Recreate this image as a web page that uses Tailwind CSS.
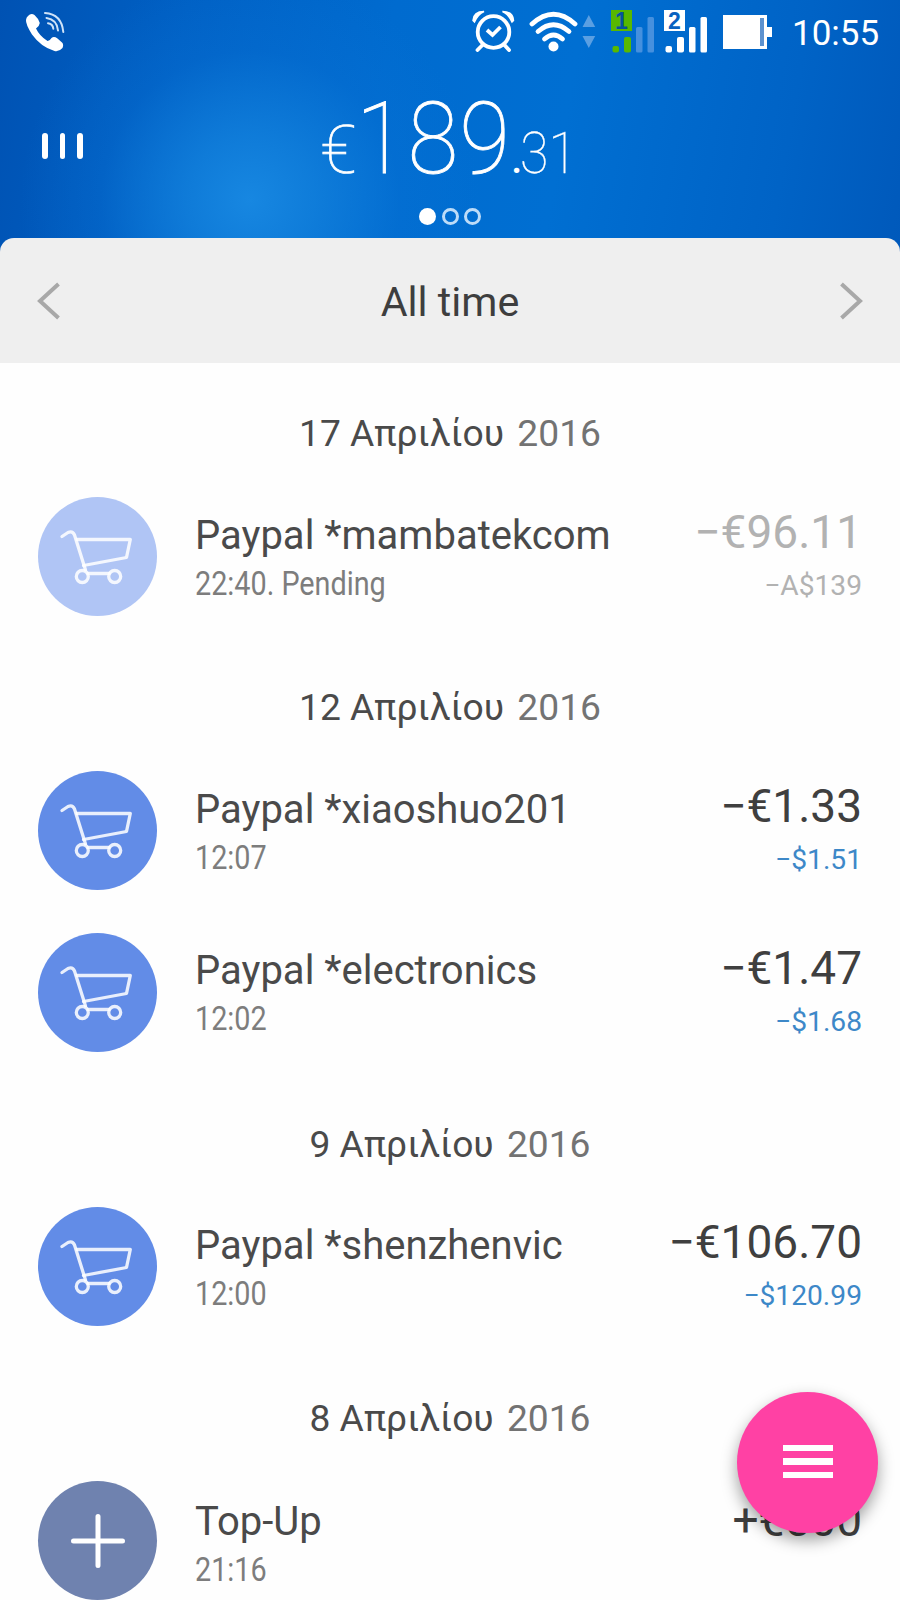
<!DOCTYPE html>
<html lang="en">
<head>
<meta charset="utf-8">
<title>Transactions</title>
<script src="https://cdn.jsdelivr.net/npm/@tailwindcss/browser@4"></script>
</head>
<body class="bg-white">
<svg class="hidden">
  <symbol id="cart" viewBox="0 0 119 119">
    <g fill="none" stroke="#fff" stroke-opacity=".86" stroke-width="3.300" stroke-linecap="round" stroke-linejoin="round">
      <path d="M24 39.500 L30 35.500 Q34.500 33.500 36.500 38 L47.500 73"/>
      <path d="M39 42.500 H92.300 L88.500 60.500 L45.500 68.500"/>
      <path d="M50 76.500 H71"/>
      <circle cx="44.300" cy="79.500" r="6"/><circle cx="76.700" cy="79.500" r="6"/>
    </g>
  </symbol>
</svg>
<main class="relative flex h-[1600px] w-[900px] flex-col overflow-hidden bg-[#fefefe] font-['Roboto',sans-serif]">
  <header class="flex h-[254px] shrink-0 flex-col bg-[radial-gradient(ellipse_230px_230px_at_250px_200px,#1787e1_0%,rgba(20,131,222,0.75)_28%,rgba(10,115,214,0.3)_65%,rgba(0,108,208,0)_100%),linear-gradient(100deg,#0052b3_0%,#0060c4_20%,#006bcf_42%,#006fd2_62%,#0063c6_86%,#0059bb_100%)] text-white">
    <div class="flex h-[66px] items-start">
      <svg class="ml-[24px] mt-[10px] h-[44px] w-[44px]" viewBox="24 10 44 44">
        <path fill="#fff" d="M28 16 Q31 12.800 34.500 15 Q38.500 18.500 39.800 23 Q39.500 26 36 28.500 Q39.500 36 47.500 41 Q49.500 41.200 51.500 38 Q54 36 57.500 38.500 L62 42.500 Q64 44.500 62.500 48 Q59 52 54.500 51 Q41 47 32 34.500 Q25.500 24 26 20 Q26.200 17.500 28 16Z"/>
        <g fill="none" stroke="#cfe3f8" stroke-width="2" stroke-linecap="round"><path d="M45 13 Q61.500 14 63.300 32"/><path d="M46.500 18 Q57 19.500 58 30.500"/><path d="M48 23.200 Q53 24 53.300 28.800"/></g>
      </svg>
      <svg class="ml-[404px] mt-[10px] h-[42px] w-[44px]" viewBox="472 10 44 42">
        <g fill="none" stroke="#fff" stroke-linecap="round"><circle cx="493.500" cy="32" r="15.800" stroke-width="3.800"/><path d="M483 44.500 L477.500 50 M504 44.500 L509 50" stroke-width="3.800"/><path d="M487 30 L492.500 35 L500.500 27" stroke-width="3.800" stroke-linecap="butt"/></g>
        <path fill="#fff" d="M473 20.500 Q473.500 11.500 484 11.500 Q478 14 474.500 22Z M513.500 20.500 Q513 11.500 502.500 11.500 Q508.500 14 512 22Z" stroke="#fff" stroke-width="1.500"/>
      </svg>
      <svg class="ml-[12px] mt-[10px] h-[44px] w-[52px]" viewBox="528 10 52 44">
        <g fill="none" stroke="#fff" stroke-width="4.800" stroke-linecap="round"><path d="M532 24 Q553.500 4.500 575 24"/><path d="M538 31.500 Q553.500 18 569 31.500"/><path d="M544.500 39 Q553.500 31 562.500 39"/></g><circle cx="553.500" cy="46.500" r="5" fill="#fff"/>
      </svg>
      <svg class="ml-[2px] mt-[14px] h-[36px] w-[14px]" viewBox="0 0 14 36"><path fill="#5a9fe2" d="M.5 13 L6.800 1 L13.200 13Z M.5 22 L6.800 34 L13.200 22Z"/></svg>
      <svg class="ml-[14px] mt-[9px] h-[46px] w-[46px]" viewBox="0 0 46 46">
        <rect x="1" y="1" width="21" height="21" fill="#58b800"/><text x="11.500" y="19.500" text-anchor="middle" font-family="Liberation Sans" font-weight="700" font-size="23" fill="#06529e">1</text>
        <rect x="2.500" y="37" width="6.500" height="6.500" rx="2" fill="#58b800"/><rect x="14" y="28" width="7" height="15.500" rx="2" fill="#58b800"/><rect x="26" y="18" width="6.500" height="25.500" rx="1.500" fill="#4590de"/><rect x="37.500" y="8" width="6.500" height="35.500" rx="1.500" fill="#4590de"/>
      </svg>
      <svg class="ml-[7px] mt-[9px] h-[46px] w-[46px]" viewBox="0 0 46 46">
        <rect x="1" y="1" width="21" height="21" fill="#fff"/><text x="11.500" y="19.500" text-anchor="middle" font-family="Liberation Sans" font-weight="700" font-size="23" fill="#0861c0">2</text>
        <g fill="#fff"><rect x="2.500" y="37" width="6.500" height="6.500" rx="2"/><rect x="14" y="28" width="7" height="15.500" rx="2"/><rect x="26" y="18" width="6.500" height="25.500" rx="1.500"/><rect x="37.500" y="8" width="6.500" height="35.500" rx="1.500"/></g>
      </svg>
      <svg class="ml-[14px] mt-[15px] h-[34px] w-[50px]" viewBox="0 0 50 34"><path fill="#fff" d="M0 0 H44 V12 H49 V22 H44 V34 H0Z"/><rect x="37" y="3" width="4" height="28" fill="#5d92cf"/></svg>
      <div class="ml-[19px] mt-[13px] text-[35px] leading-[42px] whitespace-nowrap">10:55</div>
    </div>
    <div class="flex h-[138px]">
      <div class="ml-[42px] mt-[67px] flex h-[26px] gap-[12px]"><i class="h-[26px] w-[5.5px] rounded-full bg-white"></i><i class="h-[26px] w-[5.5px] rounded-full bg-white"></i><i class="h-[26px] w-[5.5px] rounded-full bg-white"></i></div>
      <div class="ml-[238px] mt-[13px] flex h-[120px] items-baseline font-thin leading-[120px] whitespace-nowrap"><span class="w-[35px] text-[66px] [-webkit-text-stroke:0.7px_white]">€</span><span class="w-[155px] origin-left scale-x-[.92] text-[100px] tracking-[1.500px] [-webkit-text-stroke:0.9px_white]">189</span><span class="w-[9px] text-[48px] font-normal">.</span><span class="origin-left scale-x-[.91] text-[57px] [-webkit-text-stroke:0.3px_white]">31</span></div>
    </div>
    <div class="flex justify-center gap-[5.500px] pt-[4px]"><i class="size-[17px] rounded-full bg-white"></i><i class="size-[17px] rounded-full border-3 border-[#bddcf8]"></i><i class="size-[17px] rounded-full border-3 border-[#bddcf8]"></i></div>
  </header>
  <nav class="-mt-[16px] flex h-[125px] shrink-0 items-center justify-between rounded-t-[14px] bg-[#efefef] px-[37px]">
    <svg class="h-[38px] w-[24px]" viewBox="0 0 24 38"><path fill="none" stroke="#a8a8a8" stroke-width="4" d="M21.500 2 L3 19 L21.500 36"/></svg>
    <div class="pt-[3px] text-[41.200px] leading-[50px] text-[#3e3e3e]">All time</div>
    <svg class="h-[38px] w-[24px]" viewBox="0 0 24 38"><path fill="none" stroke="#a8a8a8" stroke-width="4" d="M2.500 2 L21 19 L2.500 36"/></svg>
  </nav>

  <h2 class="h-[112.5px] shrink-0 pt-[27px] text-center text-[37.200px] leading-[86px] text-[#4a4a4a]">17 Απριλίου <span class="ml-[4px] text-[#737373]">2016</span></h2>
  <section class="flex h-[161.5px] shrink-0 px-[38px]">
    <div class="mt-[21.5px] size-[119px] shrink-0 rounded-full bg-[#b0c5f5]"><svg class="size-[119px]"><use href="#cart"/></svg></div>
    <div class="ml-[38px] flex-1 pt-[36px] whitespace-nowrap"><div class="text-[40px] leading-[48px] text-[#4a4a4a]">Paypal *mambatekcom</div><div class="origin-left scale-x-[.872] text-[33px] leading-[48px] text-[#7d7d7d]">22:40. Pending</div></div>
    <div class="pt-[28.5px] text-right whitespace-nowrap text-[#b2b2b2]"><div class="text-[46px] leading-[56px]">−€96.11</div><div class="text-[28.200px] leading-[52px]">−A$139</div></div>
  </section>

  <h2 class="h-[112.5px] shrink-0 pt-[27px] text-center text-[37.200px] leading-[86px] text-[#4a4a4a]">12 Απριλίου <span class="ml-[4px] text-[#737373]">2016</span></h2>
  <section class="flex h-[161.5px] shrink-0 px-[38px]">
    <div class="mt-[21.5px] size-[119px] shrink-0 rounded-full bg-[#628ce7]"><svg class="size-[119px]"><use href="#cart"/></svg></div>
    <div class="ml-[38px] flex-1 pt-[36px] whitespace-nowrap"><div class="text-[40px] leading-[48px] text-[#4a4a4a]">Paypal *xiaoshuo201</div><div class="origin-left scale-x-[.872] text-[33px] leading-[48px] text-[#7d7d7d]">12:07</div></div>
    <div class="pt-[28.5px] text-right whitespace-nowrap text-[#3f3f3f]"><div class="text-[46px] leading-[56px]">−€1.33</div><div class="text-[28.200px] leading-[52px] text-[#3d88c8]">−$1.51</div></div>
  </section>
  <section class="flex h-[161.5px] shrink-0 px-[38px]">
    <div class="mt-[22px] size-[119px] shrink-0 rounded-full bg-[#628ce7]"><svg class="size-[119px]"><use href="#cart"/></svg></div>
    <div class="ml-[38px] flex-1 pt-[36px] whitespace-nowrap"><div class="text-[40px] leading-[48px] text-[#4a4a4a]">Paypal *electronics</div><div class="origin-left scale-x-[.872] text-[33px] leading-[48px] text-[#7d7d7d]">12:02</div></div>
    <div class="pt-[28.5px] text-right whitespace-nowrap text-[#3f3f3f]"><div class="text-[46px] leading-[56px]">−€1.47</div><div class="text-[28.200px] leading-[52px] text-[#3d88c8]">−$1.68</div></div>
  </section>

  <h2 class="h-[112.5px] shrink-0 pt-[28px] text-center text-[37.200px] leading-[86px] text-[#4a4a4a]">9 Απριλίου <span class="ml-[4px] text-[#737373]">2016</span></h2>
  <section class="flex h-[161.5px] shrink-0 px-[38px]">
    <div class="mt-[22px] size-[119px] shrink-0 rounded-full bg-[#628ce7]"><svg class="size-[119px]"><use href="#cart"/></svg></div>
    <div class="ml-[38px] flex-1 pt-[36.5px] whitespace-nowrap"><div class="text-[40px] leading-[48px] text-[#4a4a4a]">Paypal *shenzhenvic</div><div class="origin-left scale-x-[.872] text-[33px] leading-[48px] text-[#7d7d7d]">12:00</div></div>
    <div class="pt-[28.5px] text-right whitespace-nowrap text-[#3f3f3f]"><div class="text-[46px] leading-[56px]">−€106.70</div><div class="text-[28.200px] leading-[52px] text-[#3d88c8]">−$120.99</div></div>
  </section>

  <h2 class="h-[112.5px] shrink-0 pt-[28px] text-center text-[37.200px] leading-[86px] text-[#4a4a4a]">8 Απριλίου <span class="ml-[4px] text-[#737373]">2016</span></h2>
  <section class="flex h-[161.5px] shrink-0 px-[38px]">
    <div class="mt-[22px] size-[119px] shrink-0 rounded-full bg-[#6f82af]"><svg class="size-[119px]" viewBox="0 0 119 119"><path fill="none" stroke="#fff" stroke-width="5" stroke-linecap="round" d="M35.500 60 H84.500 M60 35.500 V84.500"/></svg></div>
    <div class="ml-[38px] flex-1 pt-[38.5px] whitespace-nowrap"><div class="text-[40px] leading-[48px] text-[#4a4a4a]">Top-Up</div><div class="origin-left scale-x-[.872] text-[33px] leading-[48px] text-[#7d7d7d]">21:16</div></div>
    <div class="pt-[32.5px] text-right whitespace-nowrap text-[#3f3f3f]"><div class="text-[46px] leading-[56px]">+€500</div></div>
  </section>

  <button class="absolute left-[737px] top-[1392px] flex size-[141px] flex-col items-center justify-center gap-[7px] rounded-full bg-[#ff41a4] pb-[2px] shadow-[0_7px_16px_rgba(0,0,0,0.38)]"><i class="h-[6.500px] w-[50px] bg-white"></i><i class="h-[6.500px] w-[50px] bg-white"></i><i class="h-[6.500px] w-[50px] bg-white"></i></button>
</main>
</body>
</html>
